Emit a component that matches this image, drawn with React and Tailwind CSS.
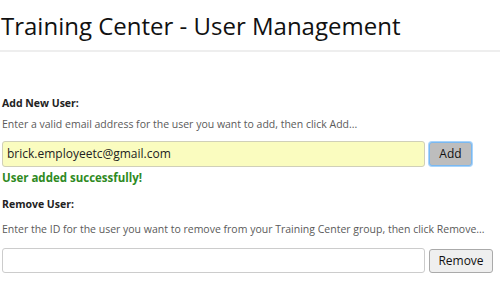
export default function App() {
  return (
    <div className="w-[500px] h-[297px] bg-white overflow-hidden" style={{ fontFamily: '"Open Sans", sans-serif' }}>
      <div className="pl-[1px] pt-[12px] pb-[10px] border-b-2 border-[#eeeeee]">
        <h1 className="text-[24px] leading-[28px] text-[#111]">Training Center - User Management</h1>
      </div>
      <div className="px-[2px] pt-[44px]">
        <div className="text-[10.5px] leading-[14px] font-bold text-[#222]">Add New User:</div>
        <div className="mt-[7px] text-[10.5px] leading-[14px] text-[#5a5a5a]">Enter a valid email address for the user you want to add, then click Add...</div>
        <div className="mt-[10px] flex items-center gap-[4px]">
          <div className="w-[423px] h-[26px] bg-[#fafcbf] border border-[#d0d0b8] rounded-[3px] flex items-center pl-[4px] text-[12px] text-[#222]">brick.employeetc@gmail.com</div>
          <div className="w-[43px] h-[24px] bg-[#bdbdbd] border border-[#7ab8f0] rounded-[3px] flex items-center justify-center text-[12px] text-[#111] shadow-[0_0_0_1px_#a8d4fb]">Add</div>
        </div>
        <div className="mt-[4px] text-[11.5px] leading-[14px] font-bold text-[#2f8a1f]">User added successfully!</div>
        <div className="mt-[12px] text-[10.5px] leading-[14px] font-bold text-[#222]">Remove User:</div>
        <div className="mt-[11px] text-[10.5px] leading-[14px] text-[#5a5a5a]">Enter the ID for the user you want to remove from your Training Center group, then click Remove...</div>
        <div className="mt-[12px] flex items-center gap-[4px]">
          <div className="w-[423px] h-[25px] bg-white border border-[#cccccc] rounded-[3px]"></div>
          <div className="w-[64px] h-[24px] bg-[#efefef] border border-[#aaaaaa] rounded-[3px] flex items-center justify-center text-[12px] text-[#111]">Remove</div>
        </div>
      </div>
    </div>
  );
}
